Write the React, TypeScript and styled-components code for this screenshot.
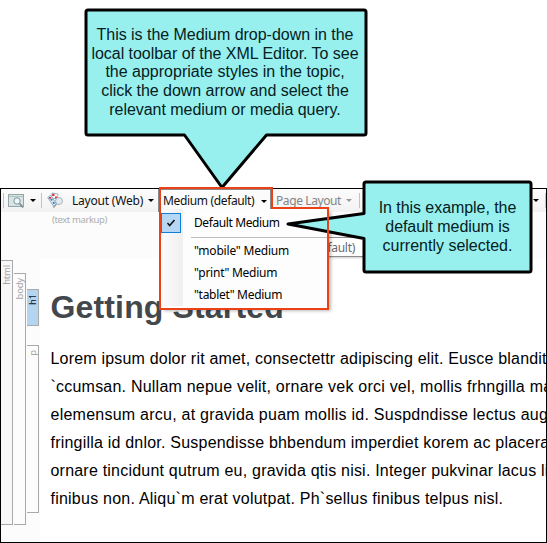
import React from 'react';
import styled, { createGlobalStyle } from 'styled-components';

const Global = createGlobalStyle`
  * { box-sizing: border-box; }
  html, body { margin: 0; background: #fff; overflow: hidden; }
`;

const ui = `"Noto Sans", "Open Sans", sans-serif`;
const arial = `"Liberation Sans", Arial, sans-serif`;

const Stage = styled.div`
  position: relative;
  width: 547px;
  height: 543px;
  padding-top: 188px;
  overflow: hidden;
  font-family: ${ui};
`;

const Editor = styled.main`
  display: flex;
  flex-direction: column;
  width: 547px;
  height: 355px;
  border: 1px solid #000;
  background: #fcfcfc;
  overflow: hidden;
`;

const Toolbar = styled.div`
  display: flex;
  align-items: center;
  height: 23px;
  flex: none;
  background: linear-gradient(#fcfcfc, #f2f2f2);

  > * {
    flex: none;
  }
`;

const Divider = styled.i<{ $ml?: number; $mr?: number }>`
  width: 1px;
  height: 15px;
  margin: 0 ${p => p.$mr ?? 0}px 0 ${p => p.$ml ?? 0}px;
  background: #c3c3c3;
`;

const Caret = styled.i<{ $ml: number; $dim?: boolean }>`
  width: 0;
  height: 0;
  margin-left: ${p => p.$ml}px;
  border: 3px solid transparent;
  border-top-color: ${p => (p.$dim ? '#9a9a9a' : '#000')};
  border-bottom: 0;
`;

const ToolLabel = styled.span<{ $w: number; $ls: number; $ml?: number; $dim?: boolean }>`
  width: ${p => p.$w}px;
  margin-left: ${p => p.$ml ?? 0}px;
  white-space: nowrap;
  font-size: 12px;
  line-height: 22px;
  letter-spacing: ${p => p.$ls}px;
  color: ${p => (p.$dim ? '#838383' : '#111')};
`;

const DropButton = styled.div`
  display: flex;
  align-items: center;
  width: 113px;
  height: 23px;
  margin-left: 4px;
  padding-left: 4px;
  border: 1px solid #8a8a8a;
  border-bottom: 0;
  background: #fbfbfb;
`;

const Markup = styled.div`
  flex: none;
  height: 46px;
  padding: 1px 0 0 51px;
  font-size: 9.5px;
  line-height: 14px;
  letter-spacing: -0.4px;
  color: #adadad;
`;

const Work = styled.div`
  display: flex;
  flex: 1;
`;

const Rail = styled.div<{ $top: number }>`
  width: 13px;
  flex: none;
  padding-top: ${p => p.$top}px;
`;

const Tag = styled.div<{ $h: number; $gap?: number; $fill?: string; $ink?: string }>`
  display: flex;
  height: ${p => p.$h}px;
  margin-bottom: ${p => p.$gap ?? 0}px;
  padding-top: 4px;
  border: 1px solid #a9a9a9;
  border-left: 0;
  background: ${p => p.$fill ?? '#fcfcfc'};
  color: ${p => p.$ink ?? '#a6a6a6'};
  font-size: 9.5px;
  line-height: 11px;
  letter-spacing: -0.2px;
  writing-mode: vertical-rl;
`;

const TagName = styled.span`
  transform: rotate(180deg);
  align-self: flex-start;
`;

const Topic = styled.article`
  flex: 1;
  min-width: 0;
  padding: 30px 0 0 10.5px;
  background: #fff;
  overflow: hidden;
  font-family: ${arial};
`;

const Heading = styled.h1`
  margin: 0 0 19px;
  font-size: 32px;
  line-height: 38px;
  letter-spacing: 0.15px;
  color: #43484c;
`;

const Line = styled.div<{ $ls: number }>`
  white-space: nowrap;
  font-size: 16px;
  line-height: 28px;
  letter-spacing: ${p => p.$ls}px;
  color: #000;
`;

const Tooltip = styled.div`
  position: absolute;
  left: 280px;
  top: 237px;
  width: 90px;
  height: 20px;
  padding-right: 14px;
  border: 1px solid #8c8c8c;
  box-shadow: 1px 1px 2px #0003;
  background: #fff;
  color: #6a6a6a;
  font-size: 12px;
  line-height: 19px;
  letter-spacing: -0.3px;
  text-align: right;
`;

const Menu = styled.div`
  position: absolute;
  left: 161px;
  top: 209px;
  width: 167px;
  height: 99px;
  padding-top: 3px;
  background: linear-gradient(90deg, #fcfcfc, #efefef) 0 0 / 22px 97px no-repeat #fdfdfd;
  box-shadow: 3px 3px 3px #0004;
`;

const MenuItem = styled.div`
  display: flex;
  height: 22px;
  align-items: center;
`;

const MenuText = styled.span<{ $ls: number }>`
  padding-bottom: 2px;
  white-space: nowrap;
  font-size: 12px;
  letter-spacing: ${p => p.$ls}px;
  color: #000;
`;

const CheckCell = styled.span<{ $on?: boolean }>`
  display: flex;
  align-items: center;
  justify-content: center;
  width: 20px;
  height: 20px;
  margin-right: 13px;
  border: 1px solid ${p => (p.$on ? '#0f7fd8' : 'transparent')};
  background: ${p => (p.$on ? '#b5d7f3' : 'transparent')};
`;

const Rule = styled.hr`
  height: 1px;
  margin: 3px 0 2px 30px;
  border: 0;
  background: #bdbdbd;
`;

const Overlay = styled.svg`
  position: absolute;
  left: 0;
  top: 0;
`;

const Callout = styled.div<{ $x: number; $y: number; $w: number; $lh: number }>`
  position: absolute;
  left: ${p => p.$x}px;
  top: ${p => p.$y}px;
  width: ${p => p.$w}px;
  font-family: ${arial};
  font-size: 16px;
  line-height: ${p => p.$lh}px;
  text-align: center;
  color: #06201f;
`;

const CalloutLine = styled.div<{ $ls: number }>`
  white-space: nowrap;
  letter-spacing: ${p => p.$ls}px;
`;

const PreviewIcon = () => (
  <svg width="17" height="16" viewBox="0 0 17 16" fill="none">
    <rect x="0.5" y="1.5" width="15" height="12" fill="#d9e4e4" stroke="#94a5a5" />
    <path d="M1 3.5h14" stroke="#b0c2c2" />
    <circle cx="9" cy="8" r="3.2" fill="#eef7fb" stroke="#7f959f" />
    <path d="M11.5 10.5l3.5 4" stroke="#7d8a90" strokeWidth="1.8" />
  </svg>
);

const LayoutIcon = () => (
  <svg width="17" height="17" viewBox="0 0 17 17" fill="none">
    <path d="M5 1l6 1-1 5-5-1z" fill="#fff" stroke="#9fb6c6" />
    <path d="M0.7 5.5l3-2.3L9.5 12l-2.7 2.5z" fill="#eaf3f8" stroke="#8fabbd" />
    <path d="M5.2 1.8h2.3v2.3H5.2zM8 4.6h2v2H8zM2 5h2v1.7H2z" fill="#d8343a" />
    <path d="M3.2 7.4l1.6-1 1.2 1.7-1.6 1zM5.4 10.5l1.5-1 1.2 1.7-1.6 1z" fill="#2f7cc4" />
    <circle cx="12" cy="9" r="3.5" fill="#e3ebef" stroke="#a5b4bc" />
    <path d="M9.5 12l-3.2 3.5" stroke="#9aa5ab" strokeWidth="1.8" />
  </svg>
);

const paragraph: [string, number][] = [
  ['Lorem ipsum dolor rit amet, consectettr adipiscing elit. Eusce blandit', 0.19],
  ['`ccumsan. Nullam nepue velit, ornare vek orci vel, mollis frhngilla ma', 0.22],
  ['elemensum arcu, at gravida puam mollis id. Suspdndisse lectus aug', 0.24],
  ['fringilla id dnlor. Suspendisse bhbendum imperdiet korem ac placera', 0.21],
  ['ornare tincidunt qutrum eu, gravida qtis nisi. Integer pukvinar lacus li', 0.21],
  ['finibus non. Aliqu`m erat volutpat. Ph`sellus finibus telpus nisl.', 0.23],
];

const hint: [string, number][] = [
  ['This is the Medium drop-down in the', -0.03],
  ['local toolbar of the XML Editor. To see', -0.04],
  ['the appropriate styles in the topic,', 0],
  ['click the down arrow and select the', -0.04],
  ['relevant medium or media query.', -0.04],
];

const example: [string, number][] = [
  ['In this example, the', -0.06],
  ['default medium is', -0.06],
  ['currently selected.', 0],
];

const media: [string, number][] = [
  ['"mobile" Medium', -0.2],
  ['"print" Medium', -0.25],
  ['"tablet" Medium', -0.3],
];

export default function App() {
  return (
    <Stage>
      <Global />
      <Editor>
        <Toolbar>
          <Divider $ml={2} $mr={4} />
          <PreviewIcon />
          <Caret $ml={5} />
          <Divider $ml={5} $mr={5} />
          <LayoutIcon />
          <ToolLabel $ml={8} $w={72} $ls={-0.2}>Layout (Web)</ToolLabel>
          <Caret $ml={4} />
          <DropButton>
            <ToolLabel $w={93} $ls={-0.35}>Medium (default)</ToolLabel>
            <Caret $ml={5} />
          </DropButton>
          <ToolLabel $ml={5} $w={66} $ls={-0.4} $dim>Page Layout</ToolLabel>
          <Caret $ml={4} $dim />
          <Divider $ml={7} $mr={173} />
          <Caret $ml={0} />
          <Divider $ml={6} />
        </Toolbar>
        <Markup>(text markup)</Markup>
        <Work>
          <Rail $top={2}>
            <Tag $h={265} $fill="#f7f7f7"><TagName>html</TagName></Tag>
          </Rail>
          <Rail $top={15}>
            <Tag $h={252}><TagName>body</TagName></Tag>
          </Rail>
          <Rail $top={31}>
            <Tag $h={37} $gap={19} $fill="#b3d5f2" $ink="#111"><TagName>h1</TagName></Tag>
            <Tag $h={168}><TagName>p</TagName></Tag>
          </Rail>
          <Topic>
            <Heading>Getting Started</Heading>
            {paragraph.map(([text, ls]) => <Line key={text} $ls={ls}>{text}</Line>)}
          </Topic>
        </Work>
      </Editor>
      <Tooltip>(default)</Tooltip>
      <Menu>
        <MenuItem>
          <CheckCell $on>
            <svg width="10" height="10" viewBox="0 0 10 10"><path d="M1.5 5l2.2 2.5L8.5 2" fill="none" stroke="#111" strokeWidth="1.5" /></svg>
          </CheckCell>
          <MenuText $ls={-0.4}>Default Medium</MenuText>
        </MenuItem>
        <Rule />
        {media.map(([text, ls]) => (
          <MenuItem key={text}>
            <CheckCell />
            <MenuText $ls={ls}>{text}</MenuText>
          </MenuItem>
        ))}
      </Menu>
      <Overlay width="547" height="543" viewBox="0 0 547 543" fill="none">
        <g fill="#97f0ed" stroke="#000" strokeWidth="3" strokeLinejoin="round">
          <path d="M88 10H364a2 2 0 0 1 2 2V133a2 2 0 0 1-2 2H266.5L222 187.5L184.5 135H88a2 2 0 0 1-2-2V12a2 2 0 0 1 2-2Z" />
          <path d="M366 182H529a2 2 0 0 1 2 2V270a2 2 0 0 1-2 2H366a2 2 0 0 1-2-2V238.5L288 224L364 213.5V184a2 2 0 0 1 2-2Z" />
        </g>
        <path d="M160 188H272V208H328V309H160Z" stroke="#eb4117" strokeWidth="2" />
      </Overlay>
      <Callout $x={86} $y={26.3} $w={278} $lh={18.6}>
        {hint.map(([text, ls]) => <CalloutLine key={text} $ls={ls}>{text}</CalloutLine>)}
      </Callout>
      <Callout $x={364} $y={199} $w={167} $lh={18.8}>
        {example.map(([text, ls]) => <CalloutLine key={text} $ls={ls}>{text}</CalloutLine>)}
      </Callout>
    </Stage>
  );
}
